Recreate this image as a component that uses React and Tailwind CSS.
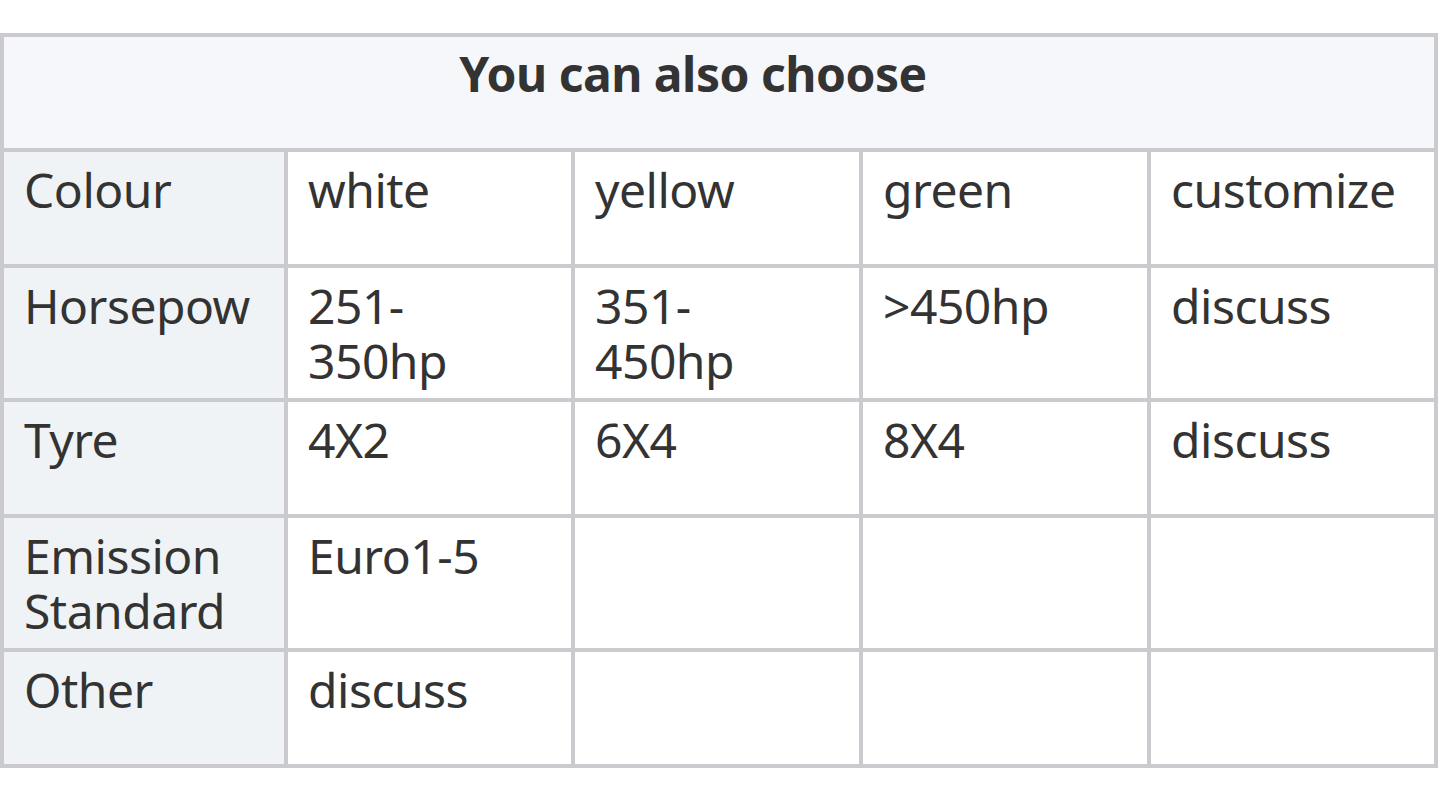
export default function App() {
  const rows = [
    { h: "h-[112px]", cells: ["Colour", "white", "yellow", "green", "customize"] },
    { h: "h-[130px]", cells: ["Horsepow", "251-\n350hp", "351-\n450hp", ">450hp", "discuss"] },
    { h: "h-[112px]", cells: ["Tyre", "4X2", "6X4", "8X4", "discuss"] },
    { h: "h-[130px]", cells: ["Emission\nStandard", "Euro1-5", "", "", ""] },
    { h: "h-[112px]", cells: ["Other", "discuss", "", "", ""] },
  ];
  return (
    <div className="w-[1440px] h-[792px] bg-white pt-[33px]" style={{ fontFamily: '"Noto Sans", "Open Sans", sans-serif' }}>
      <div className="w-[1438px] grid grid-cols-[280px_283px_284px_284px_283px] gap-[4px] p-[4px] bg-[#cbcbcf] text-[#333333] text-[48px] leading-[55px] tracking-[-0.5px]">
        <div className="col-span-5 h-[111px] bg-[#f5f7fa] pt-[9px] pr-[52px] text-center font-bold">You can also choose</div>
        {rows.map((r, i) =>
          r.cells.map((c, j) => (
            <div
              key={i + "-" + j}
              className={`${r.h} pt-[10px] pl-[20px] pr-[4px] overflow-hidden whitespace-pre-line ${j === 0 ? "bg-[#f0f3f6]" : "bg-white"}`}
            >
              {c}
            </div>
          ))
        )}
      </div>
    </div>
  );
}
